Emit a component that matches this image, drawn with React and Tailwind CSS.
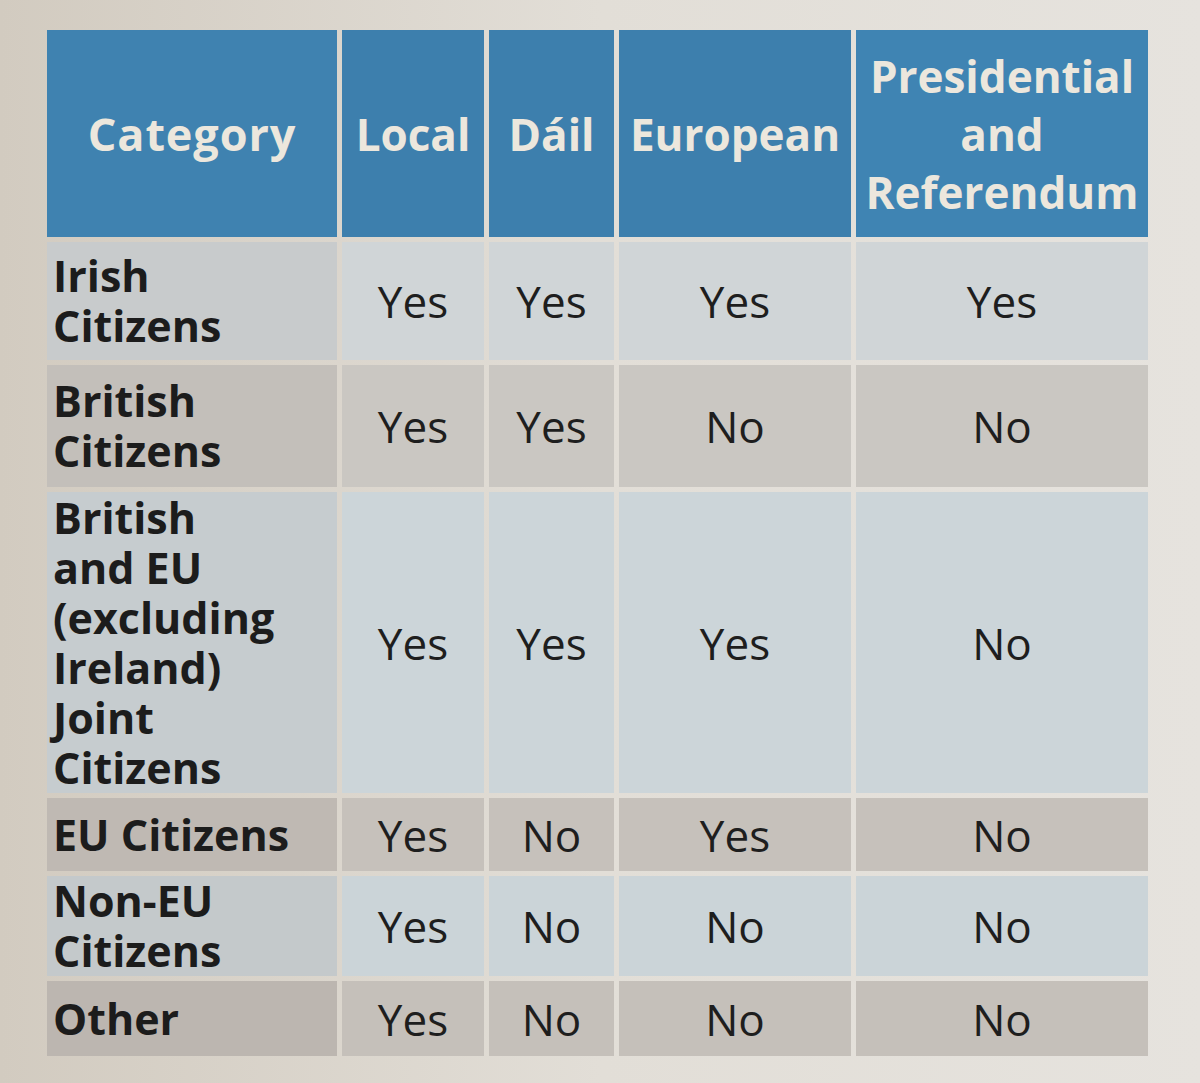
import React from "react";

const headers = ["Local", "Dáil", "European"];

const rows = [
  {
    label: ["Irish", "Citizens"],
    values: ["Yes", "Yes", "Yes", "Yes"],
    label_bg: "bg-[#c8cbcc]",
    bg: "bg-[#d0d5d7]",
    h: "h-[118px]",
  },
  {
    label: ["British", "Citizens"],
    values: ["Yes", "Yes", "No", "No"],
    label_bg: "bg-[#c3bfba]",
    bg: "bg-[#cac7c2]",
    h: "h-[122px]",
  },
  {
    label: ["British", "and EU", "(excluding", "Ireland)", "Joint", "Citizens"],
    values: ["Yes", "Yes", "Yes", "No"],
    label_bg: "bg-[#c6cccf]",
    bg: "bg-[#ccd5d9]",
    h: "h-[301px]",
  },
  {
    label: ["EU Citizens"],
    values: ["Yes", "No", "Yes", "No"],
    label_bg: "bg-[#bfb9b3]",
    bg: "bg-[#c6c1bb]",
    h: "h-[73px]",
  },
  {
    label: ["Non-EU", "Citizens"],
    values: ["Yes", "No", "No", "No"],
    label_bg: "bg-[#c4c9cb]",
    bg: "bg-[#cbd4d8]",
    h: "h-[100px]",
  },
  {
    label: ["Other"],
    values: ["Yes", "No", "No", "No"],
    label_bg: "bg-[#bcb6b0]",
    bg: "bg-[#c5c0ba]",
    h: "h-[75px]",
  },
];

const App = () => {
  return (
    <div className="w-[1200px] h-[1083px] overflow-hidden bg-gradient-to-r from-[#d2cbc0] via-[#e2ded7] to-[#e6e3de] pl-[47px] pt-[30px] font-['Open_Sans',sans-serif]">
      <div className="grid grid-cols-[290px_142px_125px_232px_292px] gap-[5px]">
        {/* Header row */}
        <div className="h-[207px] bg-[#3f82b0] flex items-center justify-center text-[45px] font-bold text-[#ece7dd] tracking-[0.02em]">
          Category
        </div>
        {headers.map((h) => (
          <div
            key={h}
            className="h-[207px] bg-[#3d7fad] flex items-center justify-center text-[44px] font-bold text-[#ece7dd]"
          >
            {h}
          </div>
        ))}
        <div className="h-[207px] bg-[#3f84b3] flex items-center justify-center text-center text-[44px] leading-[58px] font-bold text-[#ece7dd]">
          Presidential
          <br />
          and
          <br />
          Referendum
        </div>

        {/* Body rows */}
        {rows.map((row) => (
          <React.Fragment key={row.label.join(" ")}>
            <div
              className={`${row.h} ${row.label_bg} flex flex-col justify-center pl-[6px] text-[43px] leading-[50px] font-bold text-[#1c1c1c]`}
            >
              {row.label.map((line) => (
                <span key={line} className="block h-[50px]">
                  {line}
                </span>
              ))}
            </div>
            {row.values.map((v, i) => (
              <div
                key={i}
                className={`${row.h} ${row.bg} flex items-center justify-center text-[44px] text-[#1e1e1e]`}
              >
                {v}
              </div>
            ))}
          </React.Fragment>
        ))}
      </div>
    </div>
  );
};

export default App;
